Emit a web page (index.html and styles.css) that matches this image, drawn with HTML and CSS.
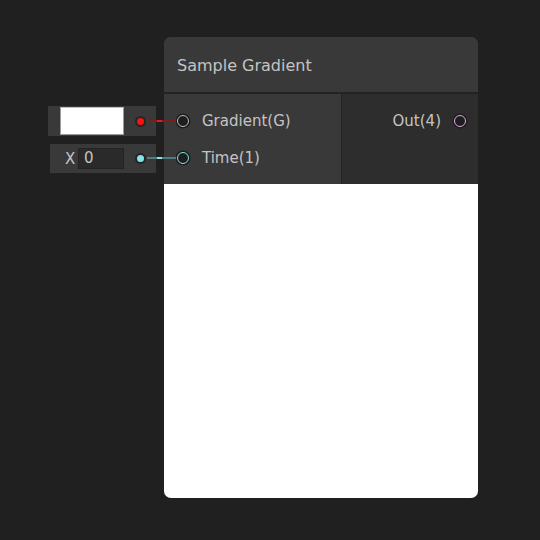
FILE: index.html
```html
<!DOCTYPE html>
<html>
<head>
<meta charset="utf-8">
<link rel="stylesheet" href="styles.css">
</head>
<body>
<div class="canvas">
  <div class="field field-gradient">
    <div class="swatch"></div>
  </div>
  <div class="field field-time">
    <span class="axis">X</span>
    <div class="num">0</div>
  </div>

  <div class="node">
    <div class="header">Sample Gradient</div>
    <div class="ports">
      <div class="inputs">
        <div class="port"><span class="pin pin-grey"></span><span class="label">Gradient(G)</span></div>
        <div class="port"><span class="pin pin-cyan"></span><span class="label">Time(1)</span></div>
      </div>
      <div class="outputs">
        <div class="port port-out"><span class="label">Out(4)</span><span class="pin pin-pink"></span></div>
      </div>
    </div>
    <div class="preview"></div>
  </div>

  <div class="wire wire-red"><span class="dot"></span><span class="line"></span></div>
  <div class="wire wire-cyan"><span class="dot"></span><span class="line"></span></div>
</div>
</body>
</html>
```

FILE: styles.css
```css
html, body {
  margin: 0;
  padding: 0;
  background: #202020;
  width: 540px;
  height: 540px;
  overflow: hidden;
  font-family: "DejaVu Sans", "Open Sans", sans-serif;
}

.canvas {
  position: relative;
  width: 540px;
  height: 540px;
}

.node {
  position: absolute;
  left: 164px;
  top: 37px;
  width: 314px;
  height: 461px;
  border-radius: 7px;
  overflow: hidden;
  display: flex;
  flex-direction: column;
  background: #393939;
}

.header {
  height: 57px;
  flex: none;
  box-sizing: border-box;
  padding-left: 13px;
  padding-top: 1px;
  display: flex;
  align-items: center;
  color: #c4c4c4;
  font-size: 16px;
  background: #393939;
  border-bottom: 2px solid #232323;
}

.ports {
  height: 90px;
  flex: none;
  display: flex;
}

.inputs {
  width: 178px;
  background: #393939;
  border-right: 1px solid #242424;
  padding-top: 15px;
  box-sizing: border-box;
  display: flex;
  flex-direction: column;
  gap: 13px;
}

.outputs {
  flex: 1;
  background: #2d2d2d;
  padding-top: 15px;
  box-sizing: border-box;
}

.port {
  height: 24px;
  display: flex;
  align-items: center;
  color: #c4c4c4;
  font-size: 15px;
}

.inputs .port {
  padding-left: 13px;
  gap: 13px;
}

.port-out {
  justify-content: flex-end;
  padding-right: 12px;
  gap: 13px;
}

.pin {
  width: 10px;
  height: 10px;
  border-radius: 50%;
  border: 1.5px solid #aaa;
  background: #1e1e1e;
  box-shadow: 0 0 0 1.5px #1e1e1e;
  flex: none;
}

.pin-grey { border-color: #b8b8b8; }
.pin-cyan { border-color: #84e4e7; }
.pin-pink { border-color: #dcaadf; }

.preview {
  flex: 1;
  background: #ffffff;
}

.field {
  position: absolute;
  left: 48px;
  width: 108px;
  background: #393939;
  box-sizing: border-box;
  display: flex;
  align-items: center;
}

.field-gradient {
  top: 106px;
  height: 30px;
  padding-left: 12px;
}

.swatch {
  width: 64px;
  height: 28px;
  box-sizing: border-box;
  background: #ffffff;
  border: 1px solid #9a9a9a;
  border-top: 1px solid #bdbdbd;
}

.field-time {
  top: 144px;
  height: 29px;
  left: 50px;
  width: 106px;
  padding-left: 15px;
}

.axis {
  color: #c4c4c4;
  font-size: 15px;
  width: 13px;
}

.num {
  width: 46px;
  height: 21px;
  box-sizing: border-box;
  background: #2a2a2a;
  border: 1px solid #232323;
  color: #c4c4c4;
  font-size: 15px;
  line-height: 19px;
  padding-left: 5px;
}

.wire {
  position: absolute;
  left: 136px;
  height: 10px;
  display: flex;
  align-items: center;
  z-index: 2;
}

.wire-red { top: 116px; }
.wire-cyan { top: 153px; }

.dot {
  width: 7px;
  height: 7px;
  border-radius: 50%;
  box-shadow: 0 0 0 2px #252525;
  margin-left: 1px;
}

.line {
  width: 29px;
  height: 2px;
  margin-left: 3px;
}

.wire-red .dot { background: #ff1010; }
.wire-red .line { background: linear-gradient(90deg, #7a1e1e 0 10px, #ff1010 10px 15px, #7a1e1e 15px); }
.wire-cyan .dot { background: #84e4e7; }
.wire-cyan .line { background: linear-gradient(90deg, #4d7f80 0 10px, #84e4e7 10px 15px, #4d7f80 15px); }
```
